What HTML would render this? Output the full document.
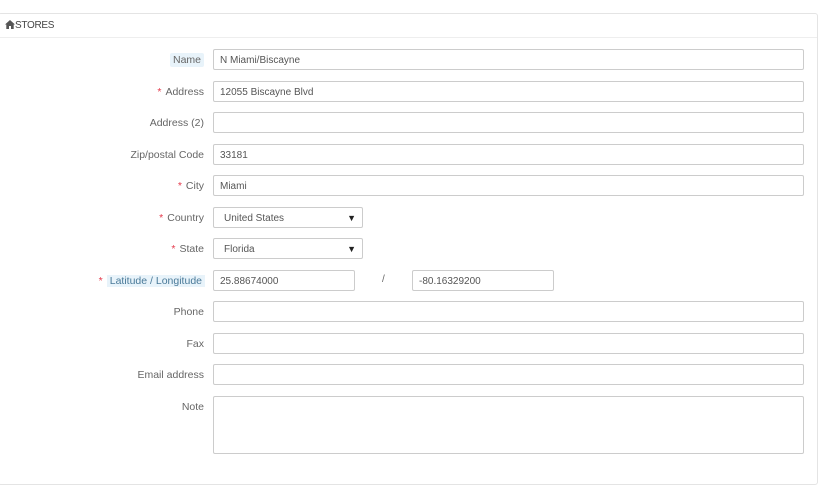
<!DOCTYPE html>
<html><head><style>
body{margin:0;background:#fff;font-family:"Liberation Sans",sans-serif;font-size:10px;color:#555;}
.panel{position:absolute;left:-2px;top:13px;width:818px;height:470px;border:1px solid #e4e4e4;border-radius:3px;}
.hd{position:absolute;left:0;top:13px;width:817px;height:24px;border-bottom:1px solid #eee;}
.hd span{position:absolute;left:5px;top:7px;font-size:10px;color:#444;letter-spacing:-0.3px}
.lbl{position:absolute;right:620px;font-size:10.5px;color:#666;line-height:14px;white-space:nowrap}
.lbl.hl{background:#e8f3fa;padding:0 3px;border-radius:2px}
.st{color:#e4394b;margin-right:4px}
.in{position:absolute;left:213px;width:589px;height:19px;border:1px solid #ccc;border-radius:2px;font-size:10px;color:#555;line-height:21px;padding-left:6px;box-sizing:content-box}
.sel{width:142px;padding-left:10px}
.sel:after{content:"▼";position:absolute;right:6px;top:0;font-size:9px;color:#222}
</style></head><body>
<div class="panel"></div>
<div class="hd"><span><svg width="10" height="9" viewBox="0 0 10 9" style="vertical-align:-1px"><path d="M5 0L0 4.5h1.3V9h2.7V6h2v3h2.7V4.5H10z" fill="#555"/></svg>STORES</span></div>

<div class="lbl hl" style="top:53px">Name</div><div class="in" style="top:49px;width:583px">N Miami/Biscayne</div>
<div class="lbl" style="top:85px"><span class="st">*</span>Address</div><div class="in" style="top:81px;width:583px">12055 Biscayne Blvd</div>
<div class="lbl" style="top:116px">Address (2)</div><div class="in" style="top:112px;width:583px"></div>
<div class="lbl" style="top:148px">Zip/postal Code</div><div class="in" style="top:144px;width:583px">33181</div>
<div class="lbl" style="top:179px"><span class="st">*</span>City</div><div class="in" style="top:175px;width:583px">Miami</div>
<div class="lbl" style="top:211px"><span class="st">*</span>Country</div><div class="in sel" style="top:207px;width:138px">United States</div>
<div class="lbl" style="top:242px"><span class="st">*</span>State</div><div class="in sel" style="top:238px;width:138px">Florida</div>
<div class="lbl" style="top:274px;right:619px"><span class="st">*</span><span style="background:#e8f3fa;padding:0 3px;color:#4a7a99">Latitude / Longitude</span></div>
<div class="in" style="top:270px;width:134px">25.88674000</div>
<div style="position:absolute;left:382px;top:274px;color:#666">/</div>
<div class="in" style="top:270px;left:412px;width:134px">-80.16329200</div>
<div class="lbl" style="top:305px">Phone</div><div class="in" style="top:301px;width:583px"></div>
<div class="lbl" style="top:337px">Fax</div><div class="in" style="top:333px;width:583px"></div>
<div class="lbl" style="top:368px">Email address</div><div class="in" style="top:364px;width:583px"></div>
<div class="lbl" style="top:400px">Note</div><div class="in" style="top:396px;width:583px;height:56px"></div>
</body></html>
